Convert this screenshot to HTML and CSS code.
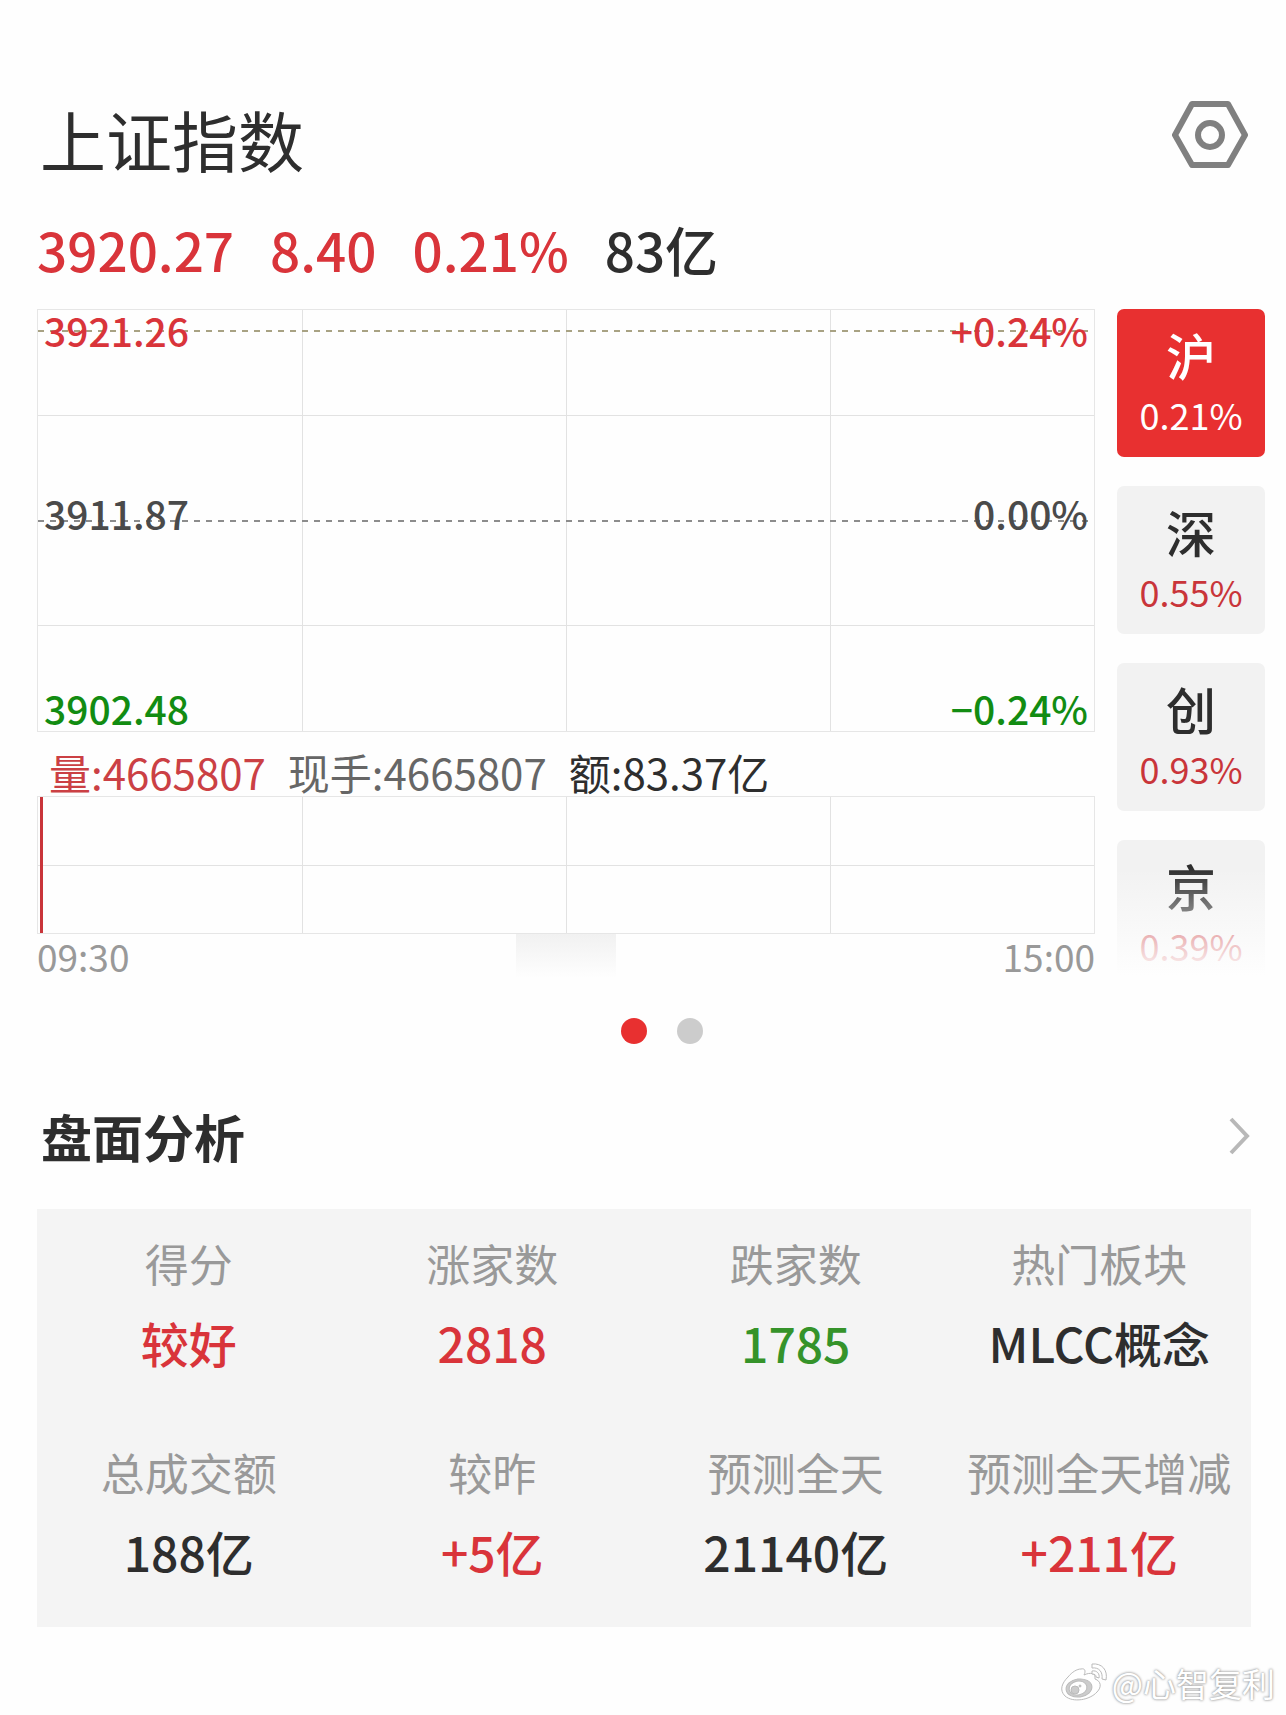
FILE: index.html
```html
<!DOCTYPE html>
<html lang="zh-CN">
<head>
    <meta charset="UTF-8">
    <meta name="viewport" content="width=device-width, initial-scale=1.0">
    <title>上证指数</title>
    <link rel="stylesheet" href="styles.css">
</head>
<body>
    <header class="header">
        <h1>上证指数</h1>
        <button type="button" class="settings" aria-label="设置">
            <svg width="76" height="70" viewBox="0 0 76 70" fill="none" stroke="#808080" stroke-width="6" stroke-linejoin="round">
                <path d="M20 4H56L73 35L56 65H20L3 35Z"/>
                <circle cx="38" cy="35" r="12"/>
            </svg>
        </button>
    </header>

    <div class="quote">
        <span class="up">3920.27</span>
        <span class="up">8.40</span>
        <span class="up">0.21%</span>
        <span>83亿</span>
    </div>

    <main class="market">
        <div class="charts">
            <!-- Price chart -->
            <div class="price-chart">
                <svg class="lines" width="100%" height="100%">
                    <line x1="25%" y1="0" x2="25%" y2="100%"/>
                    <line x1="50%" y1="0" x2="50%" y2="100%"/>
                    <line x1="75%" y1="0" x2="75%" y2="100%"/>
                    <line x1="0" y1="25%" x2="100%" y2="25%"/>
                    <line x1="0" y1="75%" x2="100%" y2="75%"/>
                    <line class="dash high" x1="0" y1="21" x2="100%" y2="21"/>
                    <line class="dash" x1="0" y1="50%" x2="100%" y2="50%"/>
                </svg>
                <div class="scale">
                    <div class="scale-row up"><span>3921.26</span><span>+0.24%</span></div>
                    <div class="scale-row middle"><span>3911.87</span><span>0.00%</span></div>
                    <div class="scale-row down"><span>3902.48</span><span>−0.24%</span></div>
                </div>
            </div>

            <div class="volume-info">
                <span class="volume">量:4665807</span>
                <span class="current">现手:4665807</span>
                <span>额:83.37亿</span>
            </div>

            <!-- Volume chart -->
            <div class="volume-chart">
                <svg class="lines" width="100%" height="100%">
                    <line x1="25%" y1="0" x2="25%" y2="100%"/>
                    <line x1="50%" y1="0" x2="50%" y2="100%"/>
                    <line x1="75%" y1="0" x2="75%" y2="100%"/>
                    <line x1="0" y1="50%" x2="100%" y2="50%"/>
                    <rect x="2" y="0" width="3" height="100%" fill="#c9353a"/>
                </svg>
            </div>

            <div class="times">
                <span>09:30</span>
                <div class="handle"></div>
                <span>15:00</span>
            </div>
        </div>

        <nav class="boards">
            <button type="button" class="board active"><b>沪</b><span>0.21%</span></button>
            <button type="button" class="board"><b>深</b><span>0.55%</span></button>
            <button type="button" class="board"><b>创</b><span>0.93%</span></button>
            <button type="button" class="board"><b>京</b><span>0.39%</span></button>
        </nav>
    </main>

    <div class="dots">
        <button type="button" class="dot active" aria-label="第1页"></button>
        <button type="button" class="dot" aria-label="第2页"></button>
    </div>

    <!-- Market analysis -->
    <section class="analysis">
        <a href="#" class="analysis-title">
            <h2>盘面分析</h2>
            <svg width="22" height="38" viewBox="0 0 22 38" fill="none" stroke="#b8b8b8" stroke-width="4">
                <path d="M2 2L18 19L2 36"/>
            </svg>
        </a>
        <dl class="stats">
            <div><dt>得分</dt><dd class="up">较好</dd></div>
            <div><dt>涨家数</dt><dd class="up">2818</dd></div>
            <div><dt>跌家数</dt><dd class="fall">1785</dd></div>
            <div><dt>热门板块</dt><dd>MLCC概念</dd></div>
            <div><dt>总成交额</dt><dd>188亿</dd></div>
            <div><dt>较昨</dt><dd class="up">+5亿</dd></div>
            <div><dt>预测全天</dt><dd>21140亿</dd></div>
            <div><dt>预测全天增减</dt><dd class="up">+211亿</dd></div>
        </dl>
    </section>

    <footer class="author">
        <svg width="48" height="40" viewBox="0 0 48 40" fill="#fff" stroke="#bbb" stroke-width="1">
            <path d="M21 6C25 5 26 8 24 12C30 9 36 10 35 16C41 18 42 24 37 29C30 37 13 40 5 33C-1 27 2 20 8 14C12 9 17 6 21 6Z"/>
            <ellipse cx="19" cy="25" rx="13" ry="9" fill="#ccc" transform="rotate(-8 19 25)"/>
            <ellipse cx="18" cy="25" rx="9" ry="7" fill="#fff" transform="rotate(-12 18 25)"/>
            <circle cx="15" cy="27" r="4" fill="#ccc"/>
            <circle cx="20" cy="23" r="1" fill="#ccc"/>
            <path d="M32 1C42 0 48 7 46 17L42 16C43 9 39 4 32 5Z"/>
            <path d="M32 8C37 7 40 11 39 15L36 14C36 12 35 11 32 11Z"/>
        </svg>
        <span>@心智复利</span>
    </footer>
</body>
</html>
```

FILE: styles.css
```css
* {
    box-sizing: border-box;
}
body {
    margin: 0;
    background-color: #fefefe;
    color: #2e2e2e;
    font-family: "Noto Sans CJK SC", sans-serif;
}
h1, h2, dl, dt, dd {
    margin: 0;
}
button {
    padding: 0;
    border: 0;
    background: none;
    font-family: inherit;
    cursor: pointer;
}
svg {
    display: block;
}
.up {
    color: #d9343a;
}
.down {
    color: #128c12;
}
.fall {
    color: #35932a;
}

/* Header */
.header {
    display: flex;
    justify-content: space-between;
    align-items: flex-start;
    padding: 100px 38px 0 40px;
}
h1 {
    font-size: 66px;
    font-weight: 400;
    line-height: 76px;
}
.quote {
    display: flex;
    gap: 36px;
    margin: 41px 37px 28px;
    font-size: 53px;
    font-weight: 500;
    line-height: 64px;
}

/* Charts */
.market {
    display: flex;
    gap: 22px;
    padding: 0 21px 0 37px;
}
.charts {
    flex: 1;
}
.price-chart {
    display: grid;
    height: 423px;
    border: 1px solid #e6e6e6;
}
.lines, .scale {
    grid-area: 1 / 1;
}
.lines line {
    stroke: #e2e2e2;
    stroke-width: 1;
    shape-rendering: crispEdges;
}
.lines .dash {
    stroke: #8c8c8c;
    stroke-width: 2;
    stroke-dasharray: 6 6;
}
.lines .high {
    stroke: #a8a283;
}
.scale {
    display: flex;
    flex-direction: column;
    justify-content: space-between;
    padding: 0 6px 3px;
    font-size: 39px;
    font-weight: 500;
    line-height: 40px;
}
.scale-row {
    display: flex;
    justify-content: space-between;
}
.middle {
    padding-bottom: 12px;
    color: #4a4a4a;
}
.volume-info {
    display: flex;
    gap: 22px;
    padding: 16px 12px 0;
    font-size: 42px;
    line-height: 48px;
}
.volume {
    color: #cb4044;
}
.current {
    color: #666;
}
.volume-chart {
    height: 138px;
    border: 1px solid #e6e6e6;
}
.times {
    display: flex;
    justify-content: space-between;
    color: #999;
    font-size: 37px;
    line-height: 44px;
}
.handle {
    width: 100px;
    background: linear-gradient(#f1f1f1, #fefefe);
}

/* Board buttons */
.boards {
    position: relative;
    display: flex;
    flex-direction: column;
    gap: 29px;
    width: 148px;
}
.boards::after {
    content: "";
    position: absolute;
    left: 0;
    right: 0;
    bottom: 0;
    height: 120px;
    background: linear-gradient(rgba(254, 254, 254, 0), #fefefe 90%);
    pointer-events: none;
}
.board {
    display: flex;
    flex-direction: column;
    height: 148px;
    padding-top: 13px;
    align-items: center;
    border-radius: 7px;
    background-color: #f2f2f2;
    color: #c9353a;
    font-size: 36px;
    line-height: 56px;
}
.board b {
    color: #2e2e2e;
    font-size: 50px;
    font-weight: 500;
    line-height: 64px;
}
.board.active {
    background-color: #e83030;
}
.board.active, .board.active b {
    color: #fff;
}

.dots {
    display: flex;
    justify-content: center;
    gap: 30px;
    margin: 30px 0 62px;
    padding-left: 37px;
}
.dot {
    width: 26px;
    height: 26px;
    border-radius: 50%;
    background-color: #ccc;
}
.dot.active {
    background-color: #e83030;
}

/* Analysis */
.analysis {
    padding: 0 35px 0 37px;
}
.analysis-title {
    display: flex;
    justify-content: space-between;
    align-items: center;
    margin-bottom: 43px;
    padding-left: 4px;
    color: inherit;
    text-decoration: none;
}
h2 {
    font-size: 51px;
    font-weight: 700;
    line-height: 60px;
}
.stats {
    display: grid;
    grid-template-columns: repeat(4, 1fr);
    row-gap: 70px;
    padding: 24px 0 46px;
    background-color: #f4f4f4;
    text-align: center;
    white-space: nowrap;
}
dt {
    margin-bottom: 19px;
    color: #999;
    font-size: 44px;
    line-height: 60px;
}
dd {
    font-size: 48px;
    font-weight: 500;
    line-height: 60px;
}

.author {
    display: flex;
    justify-content: flex-end;
    gap: 4px;
    padding: 36px 11px 11px;
    color: #fff;
    font-size: 33px;
    line-height: 40px;
    text-shadow: 0 0 3px #999, 0 0 2px #aaa;
}
```
